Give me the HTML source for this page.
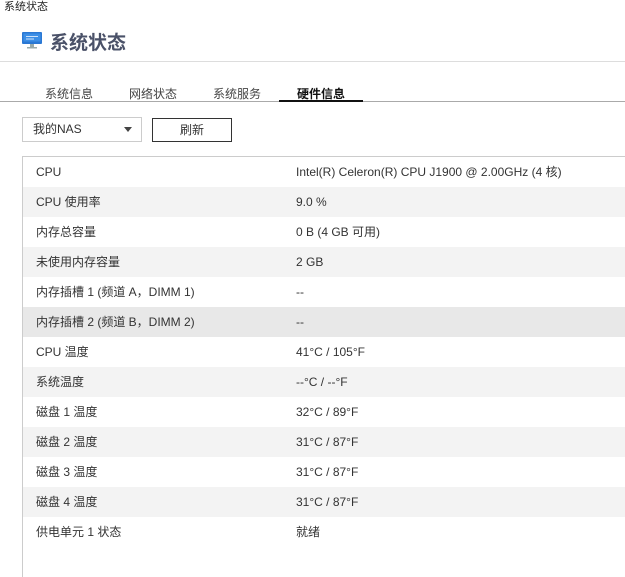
<!DOCTYPE html>
<html><head><meta charset="utf-8"><style>
*{margin:0;padding:0;box-sizing:border-box}
body{width:625px;height:577px;overflow:hidden;background:#fff;font-family:"Liberation Sans","Noto Sans CJK SC",sans-serif;color:#333;position:relative}
.abs{position:absolute}
.tab{position:absolute;top:85px;font-size:12px;color:#444}
.row{position:absolute;left:23px;width:602px;height:30px;font-size:12px;color:#333;line-height:31px}
.row span{position:absolute}
.row .l{left:13px}.row .v{left:273px}
.g{background:#f3f3f3}
</style></head><body>
<div class="abs" style="left:4px;top:0;font-size:11px;color:#222;line-height:14px">系统状态</div>
<svg class="abs" style="left:22px;top:31px" width="20" height="18" viewBox="0 0 20 18">
<rect x="0" y="1" width="20" height="12" rx="1" fill="#2a78d4"/><rect x="1.5" y="2.5" width="17" height="8" fill="#3d8fe6"/>
<rect x="4" y="5" width="12" height="1" fill="#cfe3fa"/><rect x="4" y="7.5" width="8" height="1" fill="#cfe3fa"/>
<rect x="8" y="13" width="4" height="3" fill="#9aa"/><rect x="5" y="16" width="10" height="1.5" fill="#9aa"/></svg>
<div class="abs" style="left:50px;top:28px;font-size:19px;font-weight:bold;color:#4a5168">系统状态</div>
<div class="abs" style="left:0;top:61px;width:625px;height:1px;background:#ddd"></div>
<div class="tab" style="left:45px">系统信息</div>
<div class="tab" style="left:129px">网络状态</div>
<div class="tab" style="left:213px">系统服务</div>
<div class="tab" style="left:297px;color:#111;font-weight:bold">硬件信息</div>
<div class="abs" style="left:0;top:101px;width:625px;height:1px;background:#aaa"></div>
<div class="abs" style="left:279px;top:100px;width:84px;height:2px;background:#111"></div>
<div class="abs" style="left:22px;top:117px;width:120px;height:25px;border:1px solid #ccc;font-size:12px;line-height:23px;padding-left:10px">我的NAS</div>
<div class="abs" style="left:124px;top:127px;width:0;height:0;border-left:4px solid transparent;border-right:4px solid transparent;border-top:5px solid #444"></div>
<div class="abs" style="left:152px;top:118px;width:80px;height:24px;border:1px solid #333;font-size:12px;line-height:22px;text-align:center">刷新</div>
<div class="abs" style="left:22px;top:156px;width:603px;height:421px;border-left:1px solid #ccc;border-top:1px solid #ccc"></div>
<div class="row" style="top:157px"><span class="l">CPU</span><span class="v">Intel(R) Celeron(R) CPU J1900 @ 2.00GHz (4 核)</span></div>
<div class="row g" style="top:187px"><span class="l">CPU 使用率</span><span class="v">9.0 %</span></div>
<div class="row" style="top:217px"><span class="l">内存总容量</span><span class="v">0 B (4 GB 可用)</span></div>
<div class="row g" style="top:247px"><span class="l">未使用内存容量</span><span class="v">2 GB</span></div>
<div class="row" style="top:277px"><span class="l">内存插槽 1 (频道 A，DIMM 1)</span><span class="v">--</span></div>
<div class="row" style="top:307px;background:#e8e8e8"><span class="l">内存插槽 2 (频道 B，DIMM 2)</span><span class="v">--</span></div>
<div class="row" style="top:337px"><span class="l">CPU 温度</span><span class="v">41°C / 105°F</span></div>
<div class="row g" style="top:367px"><span class="l">系统温度</span><span class="v">--°C / --°F</span></div>
<div class="row" style="top:397px"><span class="l">磁盘 1 温度</span><span class="v">32°C / 89°F</span></div>
<div class="row g" style="top:427px"><span class="l">磁盘 2 温度</span><span class="v">31°C / 87°F</span></div>
<div class="row" style="top:457px"><span class="l">磁盘 3 温度</span><span class="v">31°C / 87°F</span></div>
<div class="row g" style="top:487px"><span class="l">磁盘 4 温度</span><span class="v">31°C / 87°F</span></div>
<div class="row" style="top:517px"><span class="l">供电单元 1 状态</span><span class="v">就绪</span></div>
</body></html>
